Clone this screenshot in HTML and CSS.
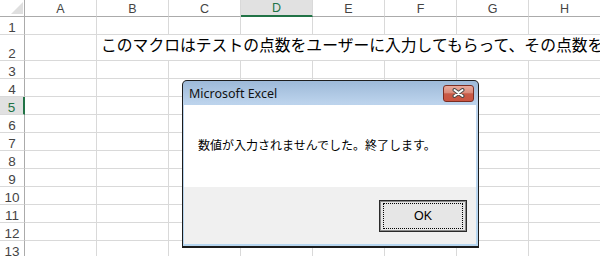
FILE: index.html
```html
<!DOCTYPE html>
<html lang="ja">
<head>
  <meta charset="UTF-8" />
  <title>Excel - MsgBox</title>
  <link rel="stylesheet" href="styles.css">
</head>
<body>
  <div class="sheet">
    <div class="corner"></div>
    <div class="colhead">A</div>
    <div class="colhead">B</div>
    <div class="colhead">C</div>
    <div class="colhead sel">D</div>
    <div class="colhead">E</div>
    <div class="colhead">F</div>
    <div class="colhead">G</div>
    <div class="colhead">H</div>

    <div class="rowhead">1</div>
    <div class="cell"></div><div class="cell"></div><div class="cell"></div><div class="cell"></div>
    <div class="cell"></div><div class="cell"></div><div class="cell"></div><div class="cell"></div>

    <div class="rowhead">2</div>
    <div class="cell"></div>
    <div class="cell wide">このマクロはテストの点数をユーザーに入力してもらって、その点数を</div>
  </div>

  <div class="dialog">
    <div class="titlebar">
      <span class="title">Microsoft Excel</span>
      <button class="closebtn">
        <svg width="13" height="10" viewBox="0 0 13 10">
          <path d="M2.5 2 L10.5 8 M10.5 2 L2.5 8" stroke="#4a4a4a" stroke-width="4" stroke-linecap="round" fill="none"/>
          <path d="M2.5 2 L10.5 8 M10.5 2 L2.5 8" stroke="#fff" stroke-width="2" stroke-linecap="round" fill="none"/>
        </svg>
      </button>
    </div>
    <div class="msgarea">数値が入力されませんでした。終了します。</div>
    <div class="btnarea">
      <button class="okbtn">OK</button>
    </div>
  </div>

<script>
// fill rows 3..13 of the sheet
const sheet = document.querySelector('.sheet');
for (let r = 3; r <= 13; r++) {
  let html = `<div class="rowhead${r === 5 ? ' sel' : ''}">${r}</div>`;
  for (let c = 0; c < 8; c++) html += '<div class="cell"></div>';
  sheet.insertAdjacentHTML('beforeend', html);
}
</script>
</body>
</html>
```
FILE: styles.css
```css
body {
  margin: 0;
  background: #fff;
  overflow: hidden;
  font-family: 'Liberation Sans', sans-serif;
}
.sheet {
  display: grid;
  grid-template-columns: 25px repeat(8, 72px);
  grid-template-rows: 17px 18px 26px repeat(11, 18px);
}
.sheet > div { box-sizing: border-box; }
.corner {
  border-right: 1px solid #ababab;
  border-bottom: 1px solid #ababab;
  display: flex;
  justify-content: flex-end;
  align-items: flex-end;
  padding: 0 1px 2px 0;
}
.corner::after {
  content: '';
  border-left: 12px solid transparent;
  border-bottom: 12px solid #dfdfdf;
}
.colhead {
  border-right: 1px solid #d9d9d9;
  border-bottom: 1px solid #ababab;
  display: flex;
  justify-content: center;
  align-items: flex-end;
  font-size: 12.5px;
  line-height: 14px;
  color: #444;
}
.colhead.sel {
  background: #e1e1e1;
  color: #217346;
  border-bottom: 2px solid #217346;
  line-height: 13px;
}
.rowhead {
  border-right: 1px solid #ababab;
  border-bottom: 1px solid #d9d9d9;
  display: flex;
  justify-content: center;
  align-items: flex-end;
  font-size: 13.5px;
  line-height: 13px;
  color: #444;
}
.rowhead.sel {
  background: #e1e1e1;
  color: #217346;
  border-right: 2px solid #217346;
}
.cell {
  border-right: 1px solid #d9d9d9;
  border-bottom: 1px solid #d9d9d9;
}
.cell.wide {
  grid-column: span 7;
  border-right: none;
  padding-left: 4px;
  white-space: nowrap;
  overflow: hidden;
  font-family: 'Noto Sans CJK JP', sans-serif;
  font-size: 15.8px;
  line-height: 20px;
  color: #000;
}

/* message box */
.dialog {
  position: absolute;
  left: 182px;
  top: 80px;
  width: 297px;
  height: 168px;
  box-sizing: border-box;
  border: 1px solid #1c1c1c;
  border-bottom-width: 2px;
  border-radius: 5px 5px 0 0;
  padding: 0 2px 2px 1px;
  background: linear-gradient(#9db9d8, #bcd3ec 22px, #b6d6f0);
  display: flex;
  flex-direction: column;
}
.titlebar {
  height: 24px;
  flex: none;
  display: flex;
  align-items: center;
  justify-content: space-between;
  padding-left: 5px;
  padding-right: 2px;
}
.title {
  font-family: 'Noto Sans', sans-serif;
  font-size: 12.5px;
  color: #111;
}
.closebtn {
  width: 31px;
  height: 17px;
  padding: 0;
  border: 1px solid #7a2d22;
  border-radius: 3px;
  background: linear-gradient(#e9aa9c, #da8b7b 45%, #c85b48 52%, #cb5441);
  display: flex;
  align-items: center;
  justify-content: center;
}
.msgarea {
  height: 82px;
  flex: none;
  background: #fff;
  box-sizing: border-box;
  padding: 32px 0 0 14px;
  font-family: 'Noto Sans CJK JP', sans-serif;
  font-size: 12px;
  line-height: 16px;
  color: #000;
}
.btnarea {
  flex: 1;
  background: #f0f0f0;
  display: flex;
  justify-content: flex-end;
  align-items: flex-start;
  padding: 13px 9px 0 0;
}
.okbtn {
  position: relative;
  width: 88px;
  height: 32px;
  border: 1px solid #2a2a2a;
  box-shadow: inset 0 0 0 1px #8c8c8c;
  background: #e6e6e6;
  font-family: 'Liberation Sans', sans-serif;
  font-size: 12.5px;
  color: #000;
  padding: 0;
}
.okbtn::after {
  content: '';
  position: absolute;
  inset: 2px 3px;
  border: 1px dotted #000;
}
```
